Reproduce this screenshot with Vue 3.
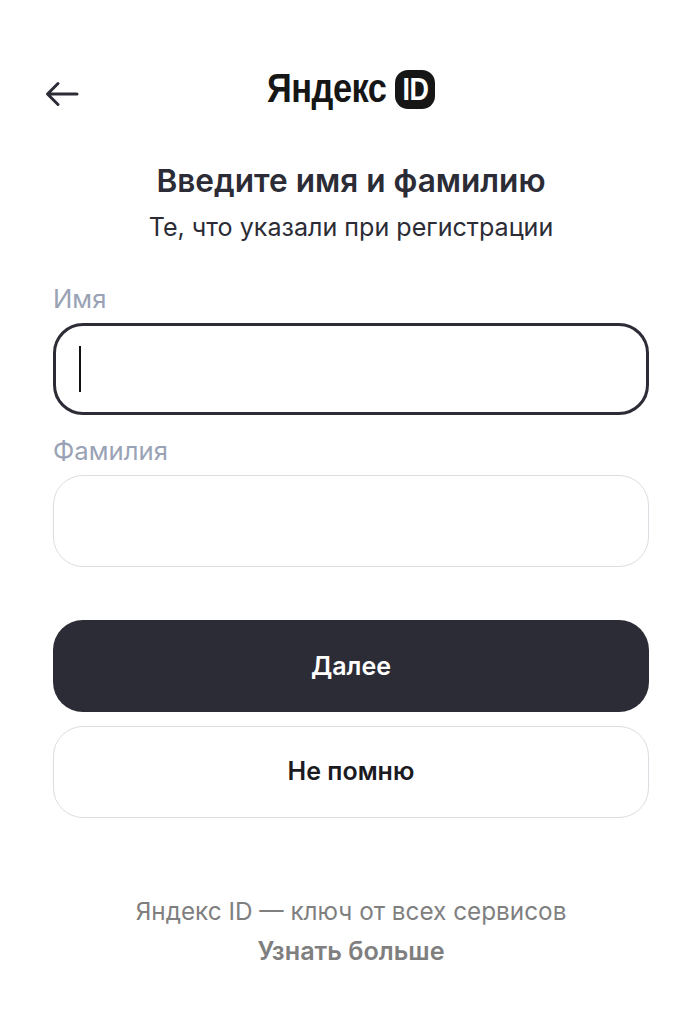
<script setup>
const fields = [
  { label: 'Имя', focused: true },
  { label: 'Фамилия', focused: false },
]
</script>

<template>
  <main class="page">
    <header class="top">
      <button class="back" aria-label="Назад">
        <svg width="34" height="26" viewBox="0 0 34 26" fill="none" stroke="#2c2c36" stroke-width="3" stroke-linecap="round" stroke-linejoin="round">
          <path d="M32 13H3M13 2.500 2.500 13 13 23.500" />
        </svg>
      </button>
      <div class="logo">
        <span class="logo-word"><span class="logo-squeeze">Яндекс</span></span>
        <span class="logo-id"><span class="id-squeeze">ID</span></span>
      </div>
    </header>

    <h1 class="title">Введите имя и фамилию</h1>
    <p class="sub">Те, что указали при регистрации</p>

    <form class="form" @submit.prevent>
      <div v-for="f in fields" :key="f.label" class="field">
        <label class="label">{{ f.label }}</label>
        <div class="input" :class="{ focused: f.focused }">
          <span v-if="f.focused" class="caret"></span>
        </div>
      </div>
      <button class="btn primary">Далее</button>
      <button class="btn secondary">Не помню</button>
    </form>

    <footer class="foot">
      <p class="foot-text">Яндекс ID — ключ от всех сервисов</p>
      <a class="foot-link">Узнать больше</a>
    </footer>
  </main>
</template>

<style scoped>
.page {
  width: 700px;
  height: 1021px;
  box-sizing: border-box;
  padding: 68px 51px 0 53px;
  background: #fff;
  font-family: Inter, "Noto Sans", sans-serif;
  color: #2c2c36;
  overflow: hidden;
}
.top {
  position: relative;
  display: flex;
  justify-content: center;
  height: 42px;
}
.back {
  position: absolute;
  left: -8px;
  top: 13px;
  padding: 0;
  border: 0;
  background: none;
  line-height: 0;
}
.logo {
  display: flex;
  align-items: center;
  gap: 9px;
}
.logo-word {
  display: block;
  width: 119px;
  height: 42px;
  font-family: "Liberation Sans", sans-serif;
  font-weight: 700;
  font-size: 41px;
  letter-spacing: -0.6px;
  color: #161616;
  line-height: 40px;
  white-space: nowrap;
}
.logo-squeeze {
  display: inline-block;
  transform: scaleX(0.84);
  transform-origin: left center;
}
.logo-id {
  display: flex;
  align-items: center;
  justify-content: center;
  width: 40px;
  height: 39px;
  border-radius: 13px;
  background: #161616;
  color: #fff;
  font-family: "Liberation Sans", sans-serif;
  font-weight: 700;
  font-size: 32px;
  letter-spacing: -0.5px;
}
.id-squeeze {
  display: inline-block;
  transform: scaleX(0.84);
}
.title {
  margin: 51px 0 0;
  text-align: center;
  font-size: 31.600px;
  line-height: 40px;
  font-weight: 600;
  letter-spacing: 0;
}
.sub {
  margin: 9px 0 0;
  text-align: center;
  font-size: 25.100px;
  line-height: 34px;
  font-weight: 400;
}
.form {
  display: flex;
  flex-direction: column;
  margin-top: 39px;
}
.field {
  display: flex;
  flex-direction: column;
  margin-bottom: 20px;
}
.field + .field {
  margin-bottom: 53px;
}
.label {
  font-size: 25.700px;
  line-height: 32px;
  color: #9aa3b5;
  margin-bottom: 8px;
}
.input {
  height: 92px;
  box-sizing: border-box;
  border: 1.500px solid #dcdde3;
  border-radius: 30px;
  display: flex;
  align-items: center;
  padding-left: 24px;
}
.input.focused {
  border: 3.500px solid #2c2c36;
  padding-left: 22.500px;
}
.caret {
  width: 2px;
  height: 46px;
  background: #111;
}
.btn {
  height: 92px;
  border-radius: 30px;
  font-family: inherit;
  font-size: 25px;
  font-weight: 600;
  box-sizing: border-box;
}
.primary {
  background: #2c2c36;
  color: #fff;
  border: 0;
  margin-bottom: 14px;
}
.secondary {
  background: #fff;
  color: #1a1a1f;
  border: 1.500px solid #dcdde3;
  padding-bottom: 3px;
}
.foot {
  margin-top: 73px;
  text-align: center;
  color: #7f7f7f;
  font-size: 24.300px;
  line-height: 40px;
}
.foot-text {
  margin: 0;
}
.foot-link {
  font-size: 25.200px;
  font-weight: 600;
  display: block;
}
</style>
